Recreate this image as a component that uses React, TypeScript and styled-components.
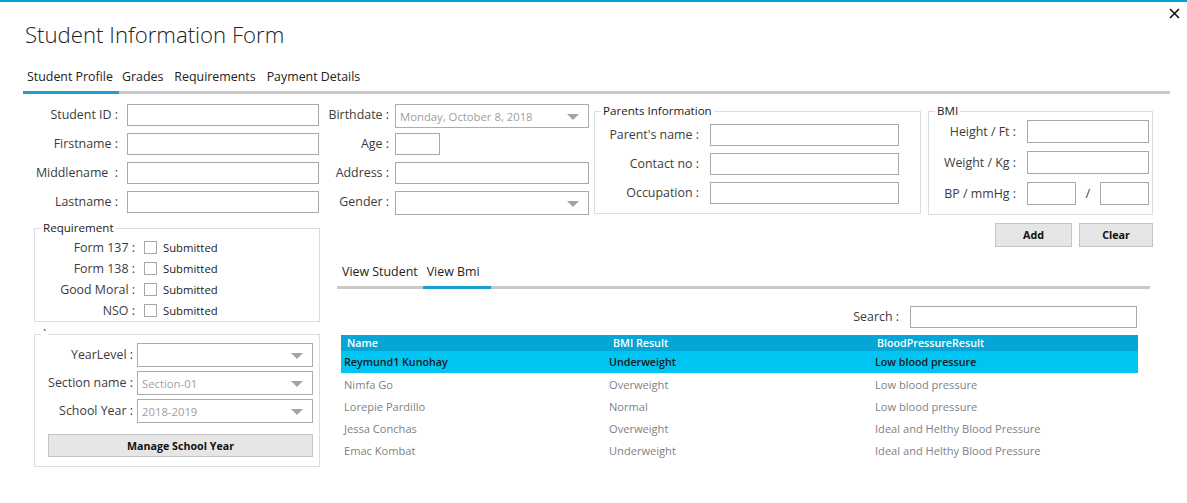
import React from "react";
import styled, { createGlobalStyle } from "styled-components";

const Global = createGlobalStyle`
  html, body { margin: 0; padding: 0; background: #fff; }
  body { font-family: "Open Sans", "Noto Sans", "Liberation Sans", sans-serif; color: #3a3a3a; }
  * { box-sizing: border-box; }
`;

const Window = styled.div`
  width: 1187px;
  height: 503px;
  overflow: hidden;
  background: #fff;
  border-top: 2px solid #00a2d4;
  display: flex;
  flex-direction: column;
`;

const TitleBar = styled.div`
  display: flex;
  justify-content: space-between;
  align-items: flex-start;
  height: 63px;
  padding: 0 7px 0 25px;
`;

const Title = styled.h1`
  margin: 18px 0 0;
  font-size: 22.2px;
  font-weight: 300;
  line-height: 30px;
  color: #222;
`;

const CloseBtn = styled.div`
  margin-top: 6px;
  width: 11px;
  height: 11px;
  display: flex;
`;

const TabBar = styled.div<{ $ml: number; $mr: number }>`
  display: flex;
  margin: 0 ${(p) => p.$mr}px 0 ${(p) => p.$ml}px;
  border-bottom: 3px solid #c9c9c9;
`;

const Tab = styled.div<{ $active?: boolean; $pl: number; $pr: number }>`
  font-size: 12.4px;
  line-height: 24px;
  padding: 0 ${(p) => p.$pr}px 2px ${(p) => p.$pl}px;
  margin-bottom: -3px;
  border-bottom: 3px solid ${(p) => (p.$active ? "#1ba1d1" : "transparent")};
  color: #222;
  white-space: nowrap;
`;

const Content = styled.div`
  display: flex;
  padding: 10px 0 0 22px;
`;

const LeftCol = styled.div`
  width: 298px;
  display: flex;
  flex-direction: column;
`;

const RightArea = styled.div`
  width: 833px;
  display: flex;
  flex-direction: column;
`;

const TopRow = styled.div`
  display: flex;
  align-items: flex-start;
`;

const FormGrid = styled.div<{ $label: number; $gap: number; $rowGap: number; $row: number }>`
  display: grid;
  grid-template-columns: ${(p) => p.$label}px auto;
  column-gap: ${(p) => p.$gap}px;
  row-gap: ${(p) => p.$rowGap}px;
  grid-auto-rows: ${(p) => p.$row}px;
  align-items: start;
  justify-items: start;
`;

const Label = styled.div<{ $lh?: number }>`
  justify-self: end;
  font-size: 12.4px;
  line-height: ${(p) => p.$lh ?? 22}px;
  white-space: pre;
  color: #3c3c3c;
`;

const TextBox = styled.div<{ $w: number; $h?: number }>`
  width: ${(p) => p.$w}px;
  height: ${(p) => p.$h ?? 22}px;
  border: 1px solid #a9a9a9;
  background: #fff;
`;

const Combo = styled.div<{ $w: number; $h?: number }>`
  width: ${(p) => p.$w}px;
  height: ${(p) => p.$h ?? 24}px;
  border: 1px solid #acacac;
  background: #fff;
  display: flex;
  align-items: center;
  justify-content: space-between;
  padding: 0 9px 0 4px;
`;

const ComboText = styled.span`
  font-size: 11.3px;
  color: #a0a0a0;
  white-space: nowrap;
`;

const Arrow = styled.span`
  width: 0;
  height: 0;
  border-left: 6px solid transparent;
  border-right: 6px solid transparent;
  border-top: 6px solid #a3a3a3;
  margin-top: 1px;
`;

const Group = styled.fieldset<{ $w: number; $ml: number; $mt?: number; $pt: number; $pb: number }>`
  width: ${(p) => p.$w}px;
  margin: ${(p) => p.$mt ?? 0}px 0 0 ${(p) => p.$ml}px;
  padding: ${(p) => p.$pt}px 0 ${(p) => p.$pb}px 0;
  border: 1px solid #d8dde0;
  min-width: 0;
`;

const Legend = styled.legend`
  margin-left: 6px;
  padding: 0 2px;
  font-size: 11.6px;
  line-height: 14px;
  color: #222;
`;

const CheckCell = styled.div`
  display: flex;
  align-items: center;
  gap: 6px;
  height: 21px;
`;

const CheckBox = styled.span`
  width: 13px;
  height: 13px;
  border: 1px solid #a8a8a8;
  background: #fff;
`;

const CheckText = styled.span`
  font-size: 11.3px;
  color: #222;
`;

const Button = styled.div<{ $w: number; $h: number }>`
  width: ${(p) => p.$w}px;
  height: ${(p) => p.$h}px;
  background: #e6e6e6;
  border: 1px solid #c4c4c4;
  display: flex;
  align-items: center;
  justify-content: center;
  font-size: 10.7px;
  font-weight: 700;
  color: #111;
`;

const ManageButton = styled(Button)`
  margin: 11px 0 0 13px;
`;

const BmiCol = styled.div`
  margin-left: 7px;
  width: 225px;
  display: flex;
  flex-direction: column;
`;

const BpCell = styled.div`
  display: flex;
  align-items: center;
`;

const Slash = styled.span`
  width: 24px;
  text-align: center;
  font-size: 13px;
  color: #444;
  line-height: 23px;
`;

const ButtonRow = styled.div`
  display: flex;
  justify-content: flex-end;
  gap: 7px;
  margin-top: 8px;
`;

const ViewTabs = styled(TabBar)`
  margin-top: 13px;
`;

const SearchRow = styled.div`
  display: flex;
  justify-content: flex-end;
  align-items: center;
  gap: 11px;
  margin: 17px 16px 0 0;
`;

const DataGrid = styled.div`
  margin: 7px 0 0 21px;
  width: 797px;
  display: flex;
  flex-direction: column;
`;

const GridRow = styled.div<{ $kind: "head" | "sel" | "row" }>`
  display: grid;
  grid-template-columns: 267px 263px 267px;
  height: ${(p) => (p.$kind === "head" ? 16 : 22)}px;
  align-items: center;
  background: ${(p) => (p.$kind === "head" ? "#05a6d5" : p.$kind === "sel" ? "#00c4f1" : "transparent")};
  color: ${(p) => (p.$kind === "head" ? "#fff" : p.$kind === "sel" ? "#1a1a1a" : "#7f7f7f")};
  font-weight: ${(p) => (p.$kind === "row" ? 400 : 600)};
  font-size: ${(p) => (p.$kind === "row" ? 11.1 : 10.7)}px;
`;

const Cell = styled.div<{ $pl: number }>`
  padding-left: ${(p) => p.$pl}px;
  white-space: nowrap;
  overflow: hidden;
`;

const rows = [
  ["Nimfa Go", "Overweight", "Low blood pressure"],
  ["Lorepie Pardillo", "Normal", "Low blood pressure"],
  ["Jessa Conchas", "Overweight", "Ideal and Helthy Blood Pressure"],
  ["Emac Kombat", "Underweight", "Ideal and Helthy Blood Pressure"],
];

export default function App() {
  return (
    <>
      <Global />
      <Window>
        <TitleBar>
          <Title>Student Information Form</Title>
          <CloseBtn>
            <svg width="11" height="11" viewBox="0 0 11 11">
              <path d="M1 1 L10 10 M10 1 L1 10" stroke="#111" strokeWidth="1.6" />
            </svg>
          </CloseBtn>
        </TitleBar>

        <TabBar $ml={23} $mr={17}>
          <Tab $active $pl={4} $pr={6}>Student Profile</Tab>
          <Tab $pl={3} $pr={7}>Grades</Tab>
          <Tab $pl={4} $pr={7}>Requirements</Tab>
          <Tab $pl={4} $pr={6}>Payment Details</Tab>
        </TabBar>

        <Content>
          <LeftCol>
            <FormGrid $label={96} $gap={9} $rowGap={7} $row={22}>
              <Label>Student ID :</Label>
              <TextBox $w={192} />
              <Label>Firstname :</Label>
              <TextBox $w={192} />
              <Label>{"Middlename  :"}</Label>
              <TextBox $w={192} />
              <Label>Lastname :</Label>
              <TextBox $w={192} />
            </FormGrid>

            <Group $w={286} $ml={12} $mt={8} $pt={2} $pb={0}>
              <Legend>Requirement</Legend>
              <FormGrid $label={100} $gap={9} $rowGap={0} $row={21}>
                <Label $lh={21}>Form 137 :</Label>
                <CheckCell><CheckBox /><CheckText>Submitted</CheckText></CheckCell>
                <Label $lh={21}>Form 138 :</Label>
                <CheckCell><CheckBox /><CheckText>Submitted</CheckText></CheckCell>
                <Label $lh={21}>Good Moral :</Label>
                <CheckCell><CheckBox /><CheckText>Submitted</CheckText></CheckCell>
                <Label $lh={21}>NSO :</Label>
                <CheckCell><CheckBox /><CheckText>Submitted</CheckText></CheckCell>
              </FormGrid>
            </Group>

            <Group $w={286} $ml={12} $mt={5} $pt={2} $pb={9}>
              <Legend>`</Legend>
              <FormGrid $label={98} $gap={4} $rowGap={4} $row={24}>
                <Label $lh={24}>YearLevel :</Label>
                <Combo $w={176}><ComboText /><Arrow /></Combo>
                <Label $lh={24}>Section name :</Label>
                <Combo $w={176}><ComboText>Section-01</ComboText><Arrow /></Combo>
                <Label $lh={24}>School Year :</Label>
                <Combo $w={176}><ComboText>2018-2019</ComboText><Arrow /></Combo>
              </FormGrid>
              <ManageButton $w={265} $h={23}>Manage School Year</ManageButton>
            </Group>
          </LeftCol>

          <RightArea>
            <TopRow>
              <FormGrid $label={69} $gap={6} $rowGap={7} $row={22}>
                <Label>Birthdate :</Label>
                <Combo $w={194}><ComboText>Monday, October 8, 2018</ComboText><Arrow /></Combo>
                <Label>Age :</Label>
                <TextBox $w={45} />
                <Label>Address :</Label>
                <TextBox $w={194} />
                <Label>Gender :</Label>
                <Combo $w={194}><ComboText /><Arrow /></Combo>
              </FormGrid>

              <Group $w={327} $ml={5} $pt={6} $pb={9}>
                <Legend>Parents Information</Legend>
                <FormGrid $label={104} $gap={11} $rowGap={7} $row={22}>
                  <Label>Parent's name :</Label>
                  <TextBox $w={189} />
                  <Label>Contact no :</Label>
                  <TextBox $w={189} />
                  <Label>Occupation :</Label>
                  <TextBox $w={189} />
                </FormGrid>
              </Group>

              <BmiCol>
                <Group $w={225} $ml={0} $pt={2} $pb={9}>
                  <Legend>BMI</Legend>
                  <FormGrid $label={87} $gap={11} $rowGap={8} $row={23}>
                    <Label $lh={23}>Height / Ft :</Label>
                    <TextBox $w={122} $h={23} />
                    <Label $lh={23}>Weight / Kg :</Label>
                    <TextBox $w={122} $h={23} />
                    <Label $lh={23}>BP / mmHg :</Label>
                    <BpCell>
                      <TextBox $w={49} $h={23} />
                      <Slash>/</Slash>
                      <TextBox $w={49} $h={23} />
                    </BpCell>
                  </FormGrid>
                </Group>
                <ButtonRow>
                  <Button $w={77} $h={24}>Add</Button>
                  <Button $w={74} $h={24}>Clear</Button>
                </ButtonRow>
              </BmiCol>
            </TopRow>

            <ViewTabs $ml={17} $mr={3}>
              <Tab $pl={5} $pr={5}>View Student</Tab>
              <Tab $active $pl={4} $pr={11}>View Bmi</Tab>
            </ViewTabs>

            <SearchRow>
              <Label>Search :</Label>
              <TextBox $w={227} />
            </SearchRow>

            <DataGrid>
              <GridRow $kind="head">
                <Cell $pl={6}>Name</Cell>
                <Cell $pl={5}>BMI Result</Cell>
                <Cell $pl={6}>BloodPressureResult</Cell>
              </GridRow>
              <GridRow $kind="sel">
                <Cell $pl={3}>Reymund1 Kunohay</Cell>
                <Cell $pl={1}>Underweight</Cell>
                <Cell $pl={4}>Low blood pressure</Cell>
              </GridRow>
              {rows.map((r) => (
                <GridRow $kind="row" key={r[0]}>
                  <Cell $pl={3}>{r[0]}</Cell>
                  <Cell $pl={1}>{r[1]}</Cell>
                  <Cell $pl={4}>{r[2]}</Cell>
                </GridRow>
              ))}
            </DataGrid>
          </RightArea>
        </Content>
      </Window>
    </>
  );
}
